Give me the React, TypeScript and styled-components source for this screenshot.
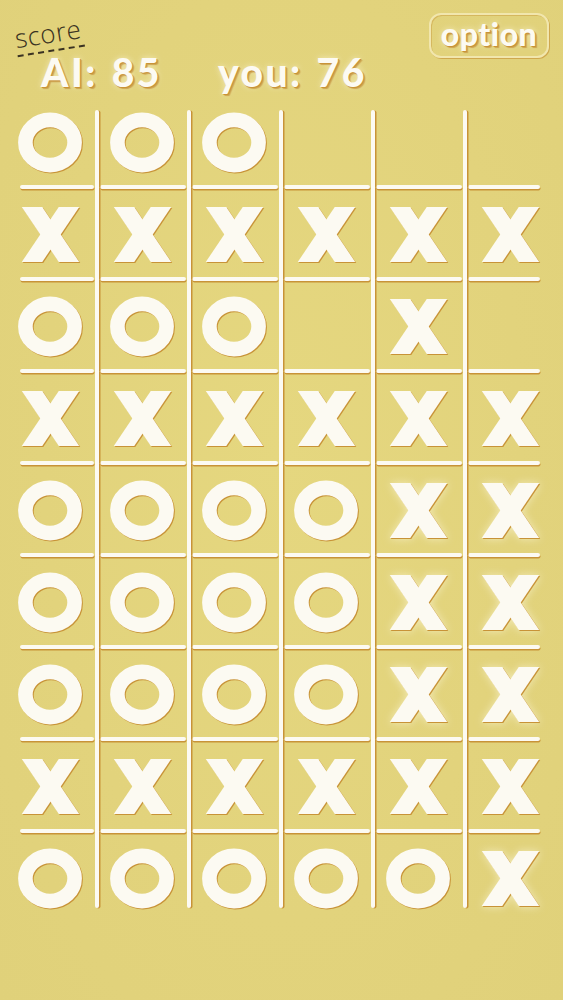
import React from "react";
import styled, { createGlobalStyle, css } from "styled-components";

const GlobalStyle = createGlobalStyle`
  html, body {
    margin: 0;
    padding: 0;
    background: #e2d37c;
  }
  * { box-sizing: border-box; }
`;

const CREAM = "#fcfaf2";
const SHADOW = "#c89338";

const Page = styled.div`
  width: 563px;
  height: 1000px;
  overflow: hidden;
  display: flex;
  flex-direction: column;
  background: radial-gradient(ellipse at 50% 45%, #e5d77f 0%, #e2d37c 60%, #e0d17a 100%);
`;

const Header = styled.header`
  height: 95px;
  display: flex;
  justify-content: space-between;
  align-items: flex-start;
  padding: 0 14px 0 12px;
`;

const ScoreBlock = styled.div`
  display: flex;
  flex-direction: column;
`;

const ScoreLabel = styled.div`
  margin-top: 21px;
  margin-left: 3px;
  width: 68px;
  font-family: "Open Sans", "DejaVu Sans", sans-serif;
  font-weight: 300;
  font-size: 26px;
  line-height: 24px;
  letter-spacing: 0.5px;
  color: #3a3222;
  transform: rotate(-9deg);
  transform-origin: center;
  padding-bottom: 5px;
  border-bottom: 2px dashed #3a3222;
`;

const ScoreLine = styled.div`
  display: flex;
  gap: 56px;
  margin-top: 0;
  margin-left: 29px;
`;

const glowText = css`
  font-family: "Lato", "Open Sans", sans-serif;
  font-weight: 900;
  color: ${CREAM};
  text-shadow: 1px 1px 0 ${SHADOW}, 2px 2px 1px rgba(190, 130, 40, 0.6),
    0 0 6px rgba(255, 250, 225, 0.6);
`;

const ScoreText = styled.div`
  ${glowText};
  font-size: 39px;
  line-height: 40px;
  letter-spacing: 2.5px;
  word-spacing: 2px;
  white-space: nowrap;
`;

const OptionButton = styled.button`
  ${glowText};
  margin-top: 13px;
  width: 120px;
  height: 45px;
  padding: 0 0 4px;
  border: 2px solid #f1e6ad;
  border-radius: 12px;
  background: transparent;
  box-shadow: 1px 1px 0 rgba(200, 150, 60, 0.7), inset 1px 1px 0 rgba(200, 150, 60, 0.45);
  font-size: 32px;
  line-height: 36px;
  letter-spacing: 0.5px;
  cursor: pointer;
`;

const COLS = 6;
const ROWS = 9;
const CELL = 92;

const Board = styled.div`
  margin-left: 5px;
  display: grid;
  grid-template-columns: repeat(${COLS}, ${CELL}px);
  grid-template-rows: repeat(${ROWS}, ${CELL}px);
`;

const Cell = styled.div<{ $row: number; $col: number }>`
  position: relative;
  display: flex;
  align-items: center;
  justify-content: center;
  padding: 2px 2px 0 0;

  ${(p) =>
    p.$row < ROWS - 1 &&
    css`
      &::after {
        content: "";
        position: absolute;
        z-index: 1;
        bottom: -2px;
        height: 4px;
        left: ${p.$col === 0 ? 15 : 3}px;
        right: ${p.$col === COLS - 1 ? 17 : 3}px;
        border-radius: 2px;
        background: ${CREAM};
        box-shadow: 0.5px 1.5px 0 ${SHADOW};
      }
    `}

  ${(p) =>
    p.$col < COLS - 1 &&
    css`
      &::before {
        content: "";
        position: absolute;
        z-index: 2;
        right: -2px;
        width: 4px;
        top: ${p.$row === 0 ? 15 : 0}px;
        bottom: ${p.$row === ROWS - 1 ? 15 : 0}px;
        border-radius: ${p.$row === 0 ? "2px 2px 0 0" : p.$row === ROWS - 1 ? "0 0 2px 2px" : "0"};
        background: ${CREAM};
        box-shadow: 1.5px 0.5px 0 ${SHADOW};
      }
    `}
`;

const PieceSvg = styled.svg<{ $glow: boolean }>`
  display: block;
  overflow: visible;
  filter: drop-shadow(1px 1px 0 ${SHADOW})
    ${(p) => (p.$glow ? "drop-shadow(0 0 4px rgba(255, 252, 230, 0.55))" : "")};
`;

const OMark: React.FC = () => (
  <PieceSvg $glow={false} width={64} height={59} viewBox="0 0 64 59">
    <ellipse cx={32} cy={29.5} rx={24.6} ry={22.6} fill="none" stroke={CREAM} strokeWidth={14.6} />
  </PieceSvg>
);

let clipCounter = 0;
const XMark: React.FC<{ glow: boolean }> = ({ glow }) => {
  const id = React.useMemo(() => `xclip-${clipCounter++}`, []);
  return (
    <PieceSvg $glow={glow} width={57} height={55} viewBox="0 0 57 55">
      <defs>
        <clipPath id={id}>
          <rect x={-5} y={0} width={67} height={55} />
        </clipPath>
      </defs>
      <g clipPath={`url(#${id})`} stroke={CREAM} strokeWidth={17}>
        <line x1={-1.1} y1={-16.5} x2={58.1} y2={71.5} />
        <line x1={58.1} y1={-16.5} x2={-1.1} y2={71.5} />
      </g>
    </PieceSvg>
  );
};

const BOARD: string[] = [
  "OOO   ",
  "XXXXXX",
  "OOO X ",
  "XXXXXX",
  "OOOOXX",
  "OOOOXX",
  "OOOOXX",
  "XXXXXX",
  "OOOOOX",
];

const GLOW = new Set(["4-4", "4-5", "5-4", "5-5", "6-4", "6-5", "8-5"]);

export default function App() {
  return (
    <>
      <GlobalStyle />
      <Page>
        <Header>
          <ScoreBlock>
            <ScoreLabel>score</ScoreLabel>
            <ScoreLine>
              <ScoreText>AI: 85</ScoreText>
              <ScoreText>you: 76</ScoreText>
            </ScoreLine>
          </ScoreBlock>
          <OptionButton type="button">option</OptionButton>
        </Header>
        <Board>
          {BOARD.map((rowStr, r) =>
            rowStr.split("").map((ch, c) => (
              <Cell key={`${r}-${c}`} $row={r} $col={c}>
                {ch === "O" && <OMark />}
                {ch === "X" && <XMark glow={GLOW.has(`${r}-${c}`)} />}
              </Cell>
            ))
          )}
        </Board>
      </Page>
    </>
  );
}
